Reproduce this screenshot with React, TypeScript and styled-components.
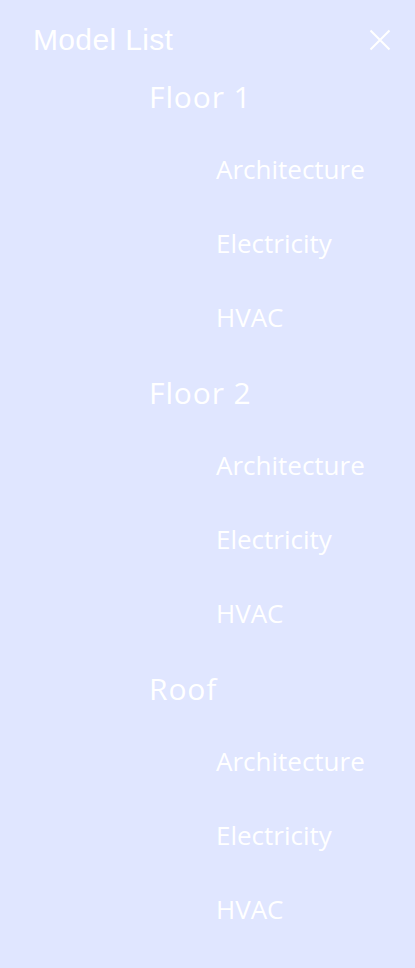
import React from "react";
import styled, { createGlobalStyle } from "styled-components";

const Global = createGlobalStyle`
  html, body { margin: 0; padding: 0; background: #e0e6ff; }
  #root { min-height: 100vh; }
`;

const Panel = styled.div`
  width: 415px;
  min-height: 968px;
  background: #e0e6ff;
  color: #ffffff;
  box-sizing: border-box;
`;

const Header = styled.div`
  display: flex;
  align-items: center;
  justify-content: space-between;
  padding: 20px 24px 17px 33px;
`;

const Title = styled.h1`
  margin: 0;
  font-family: "Liberation Sans", Arial, sans-serif;
  font-weight: 400;
  font-size: 30px;
  line-height: 40px;
  letter-spacing: 0.35px;
`;

const CloseButton = styled.button`
  border: 0;
  background: none;
  padding: 0;
  width: 22px;
  height: 22px;
  display: flex;
  cursor: pointer;
`;

const Groups = styled.div`
  display: flex;
  flex-direction: column;
  gap: 19px;
  padding-left: 149px;
`;

const Group = styled.section`
  display: flex;
  flex-direction: column;
`;

const FloorName = styled.div`
  font-family: "Open Sans", sans-serif;
  font-size: 30px;
  line-height: 40px;
  letter-spacing: 0.9px;
  margin-bottom: 15px;
`;

const Item = styled.div`
  font-family: "Open Sans", sans-serif;
  font-size: 26px;
  line-height: 74px;
  height: 74px;
  padding-left: 67px;
`;

const floors = ["Floor 1", "Floor 2", "Roof"];
const items = ["Architecture", "Electricity", "HVAC"];

export default function App() {
  return (
    <>
      <Global />
      <Panel>
        <Header>
          <Title>Model List</Title>
          <CloseButton aria-label="Close">
            <svg width="22" height="22" viewBox="0 0 22 22">
              <path d="M1.5 1.5 L20.5 20.5 M20.5 1.5 L1.5 20.5" stroke="#fff" strokeWidth="2" fill="none" />
            </svg>
          </CloseButton>
        </Header>
        <Groups>
          {floors.map((f) => (
            <Group key={f}>
              <FloorName>{f}</FloorName>
              {items.map((i) => (
                <Item key={i}>{i}</Item>
              ))}
            </Group>
          ))}
        </Groups>
      </Panel>
    </>
  );
}
